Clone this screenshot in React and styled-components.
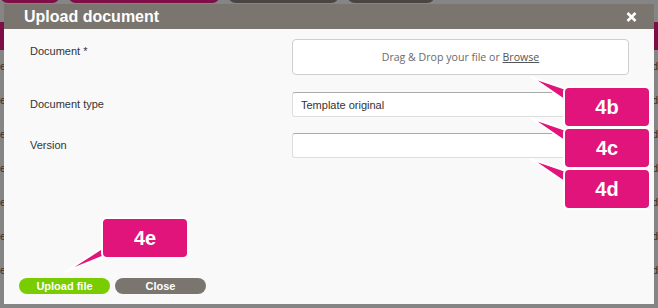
import React from "react";
import styled, { createGlobalStyle } from "styled-components";

const Global = createGlobalStyle`
  html, body {
    margin: 0;
    padding: 0;
    background: #858585;
    font-family: "Liberation Sans", Arial, sans-serif;
  }
`;

const Page = styled.div`
  position: relative;
  width: 658px;
  height: 308px;
  overflow: hidden;
  background: #858585;
`;

const TabStrip = styled.div`
  display: flex;
  gap: 8px;
  margin-top: -9px;
`;

const Tab = styled.div`
  height: 12px;
  width: ${(p) => p.w}px;
  border-radius: 0 0 8px 8px;
  background: ${(p) => (p.dark ? "#4a4542" : "#7e0f46")};
`;

const Band = styled.div`
  margin-top: 19px;
  height: 28px;
  background: #7e0f46;
`;

const BgRows = styled.div`
  display: flex;
  flex-direction: column;
  gap: 22px;
  padding: 10px 0 0 0;
`;

const BgRow = styled.div`
  display: flex;
  justify-content: space-between;
  font-size: 11px;
  color: #3a2f25;
`;

const Modal = styled.div`
  position: absolute;
  left: 4px;
  top: 4px;
  width: 650px;
  height: 300px;
  display: flex;
  flex-direction: column;
  background: #f9f9f9;
`;

const Header = styled.div`
  height: 25px;
  flex: none;
  display: flex;
  align-items: center;
  justify-content: space-between;
  padding: 0 17px 0 20px;
  background: #7a756f;
  color: #fff;
`;

const Title = styled.h1`
  margin: 0;
  font-size: 16px;
  font-weight: bold;
`;

const Body = styled.div`
  flex: 1;
  display: flex;
  flex-direction: column;
  padding: 10px 0 10px 0;
`;

const Row = styled.div`
  display: grid;
  grid-template-columns: 262px 337px;
  padding-left: 26px;
  margin-bottom: ${(p) => p.mb}px;
`;

const Label = styled.label`
  font-size: 11px;
  line-height: 25px;
  color: #333;
`;

const DropZone = styled.div`
  height: 34px;
  display: flex;
  align-items: center;
  justify-content: center;
  background: #fff;
  border: 1px solid #cfcfcf;
  border-radius: 4px;
  font-family: "Open Sans", sans-serif;
  font-size: 10.6px;
  color: #6a6a6a;

  u {
    color: #555;
  }
`;

const Field = styled.div`
  height: 23px;
  display: flex;
  align-items: center;
  padding-left: 8px;
  background: #fff;
  border: 1px solid #ddd;
  border-top-color: #aaa;
  border-radius: 3px;
  font-size: 11px;
  color: #333;
`;

const Actions = styled.div`
  margin-top: auto;
  display: flex;
  gap: 5px;
  padding-left: 15px;
`;

const Button = styled.button`
  width: 91px;
  height: 16px;
  padding: 0;
  border: none;
  border-radius: 8px;
  background: ${(p) => (p.primary ? "#78cc00" : "#7a756f")};
  color: #fff;
  font-family: "Liberation Sans", Arial, sans-serif;
  font-size: 11px;
  font-weight: bold;
  line-height: 16px;
`;

const CalloutStack = styled.div`
  position: absolute;
  left: 563px;
  top: 86px;
  display: flex;
  flex-direction: column;
`;

const CalloutWrap = styled.div`
  position: ${(p) => (p.free ? "absolute" : "relative")};
  left: ${(p) => (p.free ? `${p.x}px` : "auto")};
  top: ${(p) => (p.free ? `${p.y}px` : "auto")};
  margin-top: ${(p) => p.mt || 0}px;
`;

const Tail = styled.svg`
  position: absolute;
  left: 0;
  top: 0;
  overflow: visible;
`;

const Box = styled.div`
  position: relative;
  width: 84px;
  height: 38px;
  display: flex;
  align-items: center;
  justify-content: center;
  background: #e0147a;
  border: 2px solid #fff;
  border-radius: 6px;
  color: #fff;
  font-size: 20px;
  font-weight: bold;
`;

function Callout({ label, tail, ...rest }) {
  return (
    <CalloutWrap {...rest}>
      <Tail width="1" height="1">
        <polygon
          points={tail}
          fill="#e0147a"
          stroke="#fff"
          strokeWidth="2"
          strokeLinejoin="round"
        />
      </Tail>
      <Box>{label}</Box>
    </CalloutWrap>
  );
}

const sideTail = "-32,-9 6,4 6,17";

export default function App() {
  return (
    <Page>
      <Global />
      <TabStrip>
        <Tab w={60} />
        <Tab w={152} />
        <Tab w={111} dark />
        <Tab w={88} dark />
      </TabStrip>
      <Band />
      <BgRows>
        {[0, 1, 2, 3, 4, 5, 6].map((i) => (
          <BgRow key={i}>
            <span>e</span>
            <span>d</span>
          </BgRow>
        ))}
      </BgRows>

      <Modal>
        <Header>
          <Title>Upload document</Title>
          <svg width="11" height="10" viewBox="0 0 11 10">
            <path d="M1.5 1 L9.5 9 M9.5 1 L1.5 9" stroke="#fff" strokeWidth="2.6" />
          </svg>
        </Header>
        <Body>
          <Row mb={17}>
            <Label>Document *</Label>
            <DropZone>
              Drag &amp; Drop your file or&nbsp;<u>Browse</u>
            </DropZone>
          </Row>
          <Row mb={16}>
            <Label>Document type</Label>
            <Field>Template original</Field>
          </Row>
          <Row mb={0}>
            <Label>Version</Label>
            <Field />
          </Row>
          <Actions>
            <Button primary>Upload file</Button>
            <Button>Close</Button>
          </Actions>
        </Body>
      </Modal>

      <CalloutStack>
        <Callout label="4b" tail={sideTail} />
        <Callout label="4c" tail={sideTail} mt={-1} />
        <Callout label="4d" tail={sideTail} mt={-1} />
      </CalloutStack>
      <Callout label="4e" tail="-36,55 6,28 6,38" free x={101} y={217} />
    </Page>
  );
}
